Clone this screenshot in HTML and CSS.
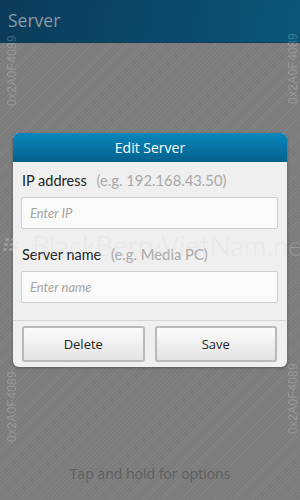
FILE: index.html
```html
<!DOCTYPE html>
<html lang="en">
<head>
    <meta charset="UTF-8">
    <meta name="viewport" content="width=device-width, initial-scale=1.0">
    <title>Server</title>
    <link rel="stylesheet" href="styles.css">
</head>
<body>
    <div class="app">
        <div class="title-bar">Server</div>
        <div class="content">
            <p class="hint">Tap and hold for options</p>
        </div>

        <!-- dim layer + dialog -->
        <div class="overlay">
            <div class="dialog">
                <div class="dialog-title">Edit Server</div>
                <div class="dialog-body">
                    <div class="field">
                        <div class="label">IP address <span class="example">(e.g. 192.168.43.50)</span></div>
                        <div class="input">Enter IP</div>
                    </div>
                    <div class="field">
                        <div class="label">Server name <span class="example">(e.g. Media PC)</span></div>
                        <div class="input">Enter name</div>
                    </div>
                </div>
                <div class="dialog-buttons">
                    <div class="btn">Delete</div>
                    <div class="btn">Save</div>
                </div>
            </div>
        </div>

        <!-- watermarks -->
        <div class="mark mark-left-top">0x2A0F4089</div>
        <div class="mark mark-right-top">0x2A0F4089</div>
        <div class="mark mark-left-bottom">0x2A0F4089</div>
        <div class="mark mark-right-bottom">0x2A0F4089</div>
        <div class="site-mark">
            <svg class="bb-logo" width="16" height="14" viewBox="0 0 16 14">
                <rect x="3" y="0" width="4" height="3" rx="1"/>
                <rect x="9" y="0" width="4" height="3" rx="1"/>
                <rect x="2" y="5" width="4" height="3" rx="1"/>
                <rect x="8" y="5" width="4" height="3" rx="1"/>
                <rect x="13" y="3" width="3" height="3" rx="1"/>
                <rect x="12" y="8" width="3" height="3" rx="1"/>
                <rect x="1" y="10" width="4" height="3" rx="1"/>
                <rect x="7" y="10" width="4" height="3" rx="1"/>
            </svg>
            <span>BlackBerryVietNam.net</span>
        </div>
    </div>
</body>
</html>
```

FILE: styles.css
```css
body {
    margin: 0;
    font-family: "Open Sans", "Noto Sans", sans-serif;
}

.app {
    position: relative;
    width: 300px;
    height: 500px;
    overflow: hidden;
    display: flex;
    flex-direction: column;
    background-color: #7f7f7f;
    background-image: repeating-linear-gradient(135deg, rgba(255, 255, 255, 0.03) 0 1px, rgba(0, 0, 0, 0.03) 1px 3px);
}

.title-bar {
    height: 43px;
    box-sizing: border-box;
    padding: 8px 0 0 8px;
    font-size: 17.5px;
    color: #8c9ba3;
    background: linear-gradient(100deg, #0c3b5a 0%, #0b4a6c 60%, #0a5878 100%);
    border-bottom: 1px solid #123a52;
}

.content {
    flex: 1;
    display: flex;
    flex-direction: column;
    justify-content: flex-end;
}

.hint {
    margin: 0 0 17px;
    text-align: center;
    font-size: 14px;
    color: #5e5e5e;
}

.overlay {
    position: absolute;
    inset: 0;
    display: flex;
    justify-content: center;
    align-items: center;
}

.dialog {
    width: 274px;
    height: 234px;
    display: flex;
    flex-direction: column;
    background-color: #efefef;
    border-radius: 6px;
    overflow: hidden;
    box-shadow: 0 1px 3px rgba(0, 0, 0, 0.3);
}

.dialog-title {
    height: 29px;
    line-height: 29px;
    text-align: center;
    font-size: 14px;
    color: #ffffff;
    background: linear-gradient(#0a86bd, #03618d);
}

.dialog-body {
    flex: 1;
    padding: 9px 9px 0 8px;
    display: flex;
    flex-direction: column;
    gap: 16px;
}

.field {
    display: flex;
    flex-direction: column;
    gap: 7px;
}

.label {
    padding-left: 1px;
    font-family: Lato, "Open Sans", sans-serif;
    font-size: 14.5px;
    line-height: 19px;
    color: #222222;
}

.example {
    margin-left: 6px;
    font-size: 14.8px;
    color: #a9a9a9;
}

.input {
    height: 32px;
    box-sizing: border-box;
    padding-left: 8px;
    line-height: 30px;
    font-family: Lato, "Open Sans", sans-serif;
    font-size: 13px;
    font-style: italic;
    color: #a5a5a5;
    background-color: #fafafa;
    border: 1px solid #cfcfcf;
    border-radius: 2px;
}

.dialog-buttons {
    height: 47px;
    box-sizing: border-box;
    border-top: 1px solid #d6d6d6;
    padding: 5px 10px 5px 9px;
    display: flex;
    gap: 10px;
}

.btn {
    flex: 1;
    display: flex;
    justify-content: center;
    align-items: center;
    font-size: 13px;
    color: #222222;
    background: linear-gradient(#fbfbfb, #e4e4e4);
    border: 2px solid #b9b9b9;
    border-radius: 3px;
}

.mark {
    position: absolute;
    font-family: "Liberation Sans", Arial, sans-serif;
    font-size: 12px;
    letter-spacing: 0.3px;
    color: rgba(255, 255, 255, 0.22);
    transform: rotate(-90deg);
    transform-origin: left top;
    white-space: nowrap;
}

.mark-left-top { left: 5px; top: 106px; }
.mark-right-top { left: 286px; top: 104px; }
.mark-left-bottom { left: 5px; top: 442px; }
.mark-right-bottom { left: 286px; top: 434px; }

.site-mark {
    position: absolute;
    left: 2px;
    top: 228px;
    display: flex;
    align-items: center;
    gap: 14px;
    color: rgba(215, 215, 215, 0.32);
    fill: rgba(215, 215, 215, 0.32);
    font-family: Lato, "Open Sans", sans-serif;
    font-weight: 300;
    font-size: 28px;
    white-space: nowrap;
}
```
